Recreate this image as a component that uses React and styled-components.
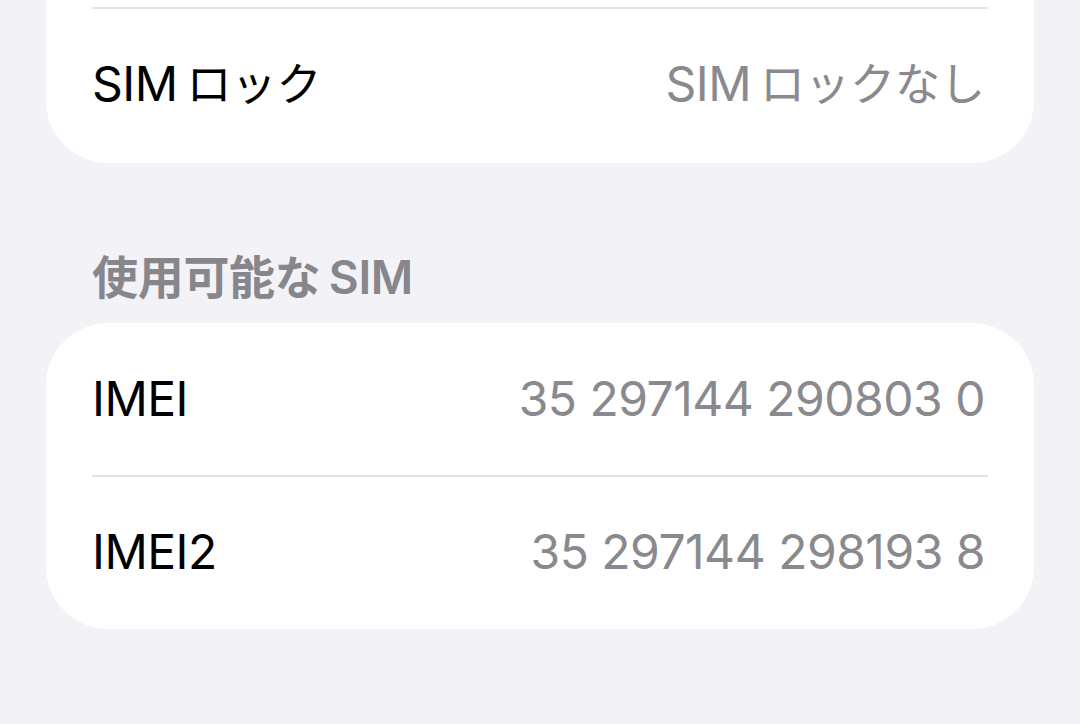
import React from 'react';
import styled, { createGlobalStyle } from 'styled-components';

const GlobalStyle = createGlobalStyle`
  html, body {
    margin: 0;
    padding: 0;
    background: #f2f2f7;
  }
  body {
    font-family: "Inter", "Noto Sans CJK JP", sans-serif;
    -webkit-font-smoothing: antialiased;
  }
`;

const Page = styled.div`
  width: 1080px;
  height: 724px;
  overflow: hidden;
  padding: 0 46px;
  box-sizing: border-box;
  display: flex;
  flex-direction: column;
`;

const Card = styled.div`
  background: #ffffff;
  border-radius: ${(p) => (p.$cropped ? '0 0 62px 62px' : '62px')};
  padding-top: ${(p) => (p.$cropped ? '7px' : '0')};
`;

const Separator = styled.div`
  height: 2px;
  margin: 0 46px;
  background: #e3e3e6;
`;

const Row = styled.div`
  height: ${(p) => p.$height || 152}px;
  padding: 0 49px 0 46px;
  display: flex;
  align-items: center;
  justify-content: space-between;
  font-size: 48px;
  line-height: 60px;
  letter-spacing: -0.5px;
`;

const Label = styled.span`
  color: #000000;
  margin-top: ${(p) => p.$lift || 0}px;
`;

const Value = styled.span`
  color: #8a8a8e;
  margin-top: ${(p) => p.$lift || 0}px;
`;

const Jp = styled.span`
  font-size: 45px;
  letter-spacing: 0;
  margin-left: -4px;
`;

const SectionHeader = styled.div`
  padding: 88px 0 0 46px;
  height: 72px;
  font-size: 46px;
  font-weight: 600;
  color: #86868b;
  line-height: 52px;
  letter-spacing: -0.3px;
  word-spacing: -3px;
`;

const simRows = [
  { label: 'IMEI', value: '35 297144 290803 0' },
  { label: 'IMEI2', value: '35 297144 298193 8' },
];

export default function App() {
  return (
    <>
      <GlobalStyle />
      <Page>
        <Card $cropped>
          <Separator />
          <Row $height={154}>
            <Label $lift={-4}>SIM <Jp>ロック</Jp></Label>
            <Value $lift={-4}>SIM <Jp>ロックなし</Jp></Value>
          </Row>
        </Card>
        <SectionHeader>使用可能な SIM</SectionHeader>
        <Card>
          {simRows.map((row, i) => (
            <React.Fragment key={row.label}>
              {i > 0 && <Separator />}
              <Row>
                <Label $lift={i > 0 ? -3 : 0}>{row.label}</Label>
                <Value $lift={i > 0 ? -3 : 0}>{row.value}</Value>
              </Row>
            </React.Fragment>
          ))}
        </Card>
      </Page>
    </>
  );
}
